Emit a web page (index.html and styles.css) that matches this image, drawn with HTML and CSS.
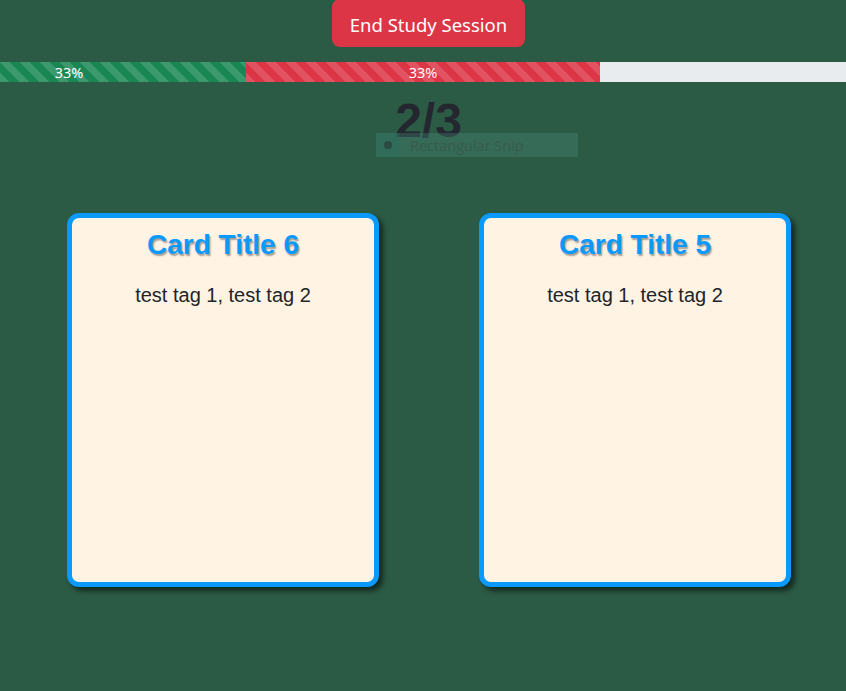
FILE: index.html
```html
<!DOCTYPE html>
<html>
<head>
<meta charset="utf-8">
<link rel="stylesheet" href="styles.css">
</head>
<body>
<div class="top">
  <button class="end-btn">End Study Session</button>
</div>
<div class="progress">
  <div class="bar bar-green" style="width:246px"><span class="green-label">33%</span></div>
  <div class="bar bar-red" style="width:354px">33%</div>
</div>
<div class="heading-wrap">
  <h1 class="count">2/3</h1>
  <div class="snip"><span class="snip-icon"><span class="snip-dot"></span></span><span class="snip-text">Rectangular Snip</span></div>
</div>
<div class="cards">
  <div class="card">
    <h2 class="card-title">Card Title 6</h2>
    <p class="card-tags">test tag 1, test tag 2</p>
  </div>
  <div class="card">
    <h2 class="card-title">Card Title 5</h2>
    <p class="card-tags">test tag 1, test tag 2</p>
  </div>
</div>
</body>
</html>
```
FILE: styles.css
```css
html, body {
  margin: 0;
  padding: 0;
}
body {
  background: #2b5a45;
  font-family: "Liberation Sans", Arial, sans-serif;
  width: 846px;
  height: 691px;
  overflow: hidden;
}
.top {
  display: flex;
  justify-content: center;
}
.end-btn {
  margin-top: -1px;
  margin-left: 11px;
  width: 193px;
  height: 48px;
  border: none;
  border-radius: 8px;
  background: #dc3545;
  color: #fff;
  font-family: "Noto Sans", "Open Sans", sans-serif;
  font-size: 18.5px;
  padding: 2px 0 0 0;
}
.progress {
  margin-top: 15px;
  height: 20px;
  display: flex;
  background: #e9ecef;
}
.bar {
  height: 20px;
  display: flex;
  align-items: center;
  justify-content: center;
  color: #fff;
  font-family: "Noto Sans", "Open Sans", sans-serif;
  font-size: 14.5px;
  background-image: linear-gradient(45deg, rgba(255,255,255,.15) 25%, transparent 25%, transparent 50%, rgba(255,255,255,.15) 50%, rgba(255,255,255,.15) 75%, transparent 75%, transparent);
  background-size: 20px 20px;
}
.bar-green {
  background-color: #198754;
  justify-content: flex-start;
}
.green-label {
  width: 138px;
  text-align: center;
}
.bar-red {
  background-color: #dc3545;
}
.heading-wrap {
  position: relative;
  height: 131px;
}
.count {
  margin: 0;
  padding-top: 10px;
  padding-left: 11px;
  text-align: center;
  font-size: 48px;
  font-weight: bold;
  line-height: 1.2;
  color: #24272f;
}
.snip {
  position: absolute;
  left: 376px;
  top: 51px;
  width: 202px;
  height: 24px;
  display: flex;
  align-items: center;
  background: rgba(75, 150, 130, 0.3);
}
.snip-icon {
  width: 24px;
  height: 24px;
  display: flex;
  align-items: center;
  justify-content: center;
  background: rgba(40, 110, 100, 0.25);
}
.snip-dot {
  width: 8px;
  height: 8px;
  border-radius: 50%;
  background: #2a4b40;
}
.snip-text {
  margin-left: 10px;
  font-family: "Open Sans", "Noto Sans", sans-serif;
  font-size: 14.5px;
  color: #385a4e;
}
.cards {
  display: flex;
  padding-left: 67px;
  gap: 100px;
}
.card {
  box-sizing: border-box;
  width: 312px;
  height: 374px;
  border: 5px solid #0a99ff;
  border-radius: 12px;
  background: #fff3e4;
  box-shadow: 4px 4px 5px rgba(0, 0, 0, 0.55);
  text-align: center;
  padding-top: 10px;
}
.card-title {
  margin: 0;
  font-size: 28px;
  font-weight: bold;
  line-height: 1.2;
  color: #0a99ff;
  text-shadow: 1.5px 1.5px 1.5px rgba(0, 0, 0, 0.35);
}
.card-tags {
  margin: 21px 0 0 0;
  font-size: 20px;
  line-height: 1.2;
  color: #212529;
}
```
